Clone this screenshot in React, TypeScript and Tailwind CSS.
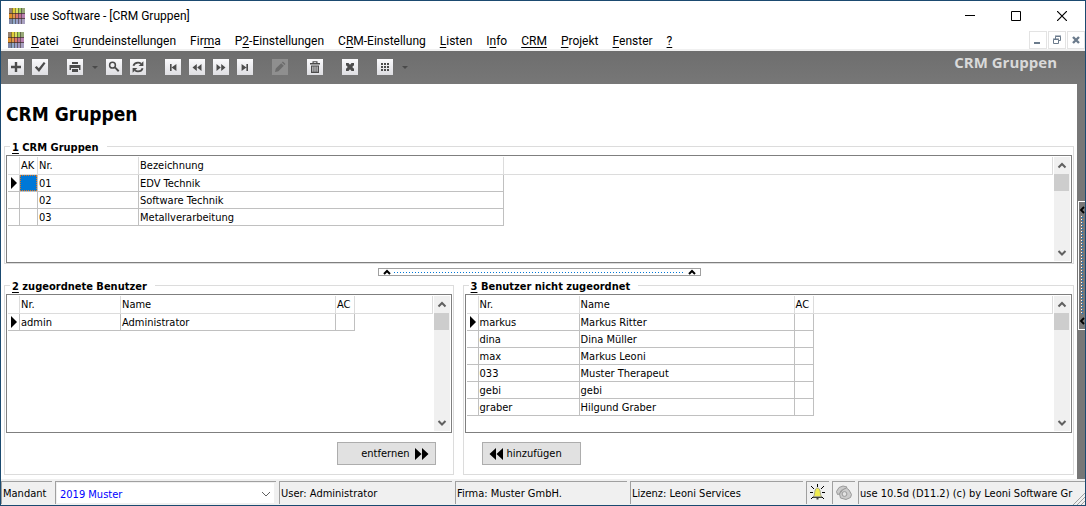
import type { ReactNode } from "react";

type Row = { id: string; cells: string[] };

const MENU = [
  { before: "", key: "D", after: "atei" },
  { before: "", key: "G", after: "rundeinstellungen" },
  { before: "Fir", key: "m", after: "a" },
  { before: "P", key: "2", after: "-Einstellungen" },
  { before: "C", key: "R", after: "M-Einstellung" },
  { before: "", key: "L", after: "isten" },
  { before: "I", key: "n", after: "fo" },
  { before: "", key: "CRM", after: "" },
  { before: "", key: "P", after: "rojekt" },
  { before: "", key: "F", after: "enster" },
  { before: "", key: "?", after: "" },
];

const GROUPS: Row[] = [
  { id: "01", cells: ["", "01", "EDV Technik"] },
  { id: "02", cells: ["", "02", "Software Technik"] },
  { id: "03", cells: ["", "03", "Metallverarbeitung"] },
];

const ASSIGNED: Row[] = [{ id: "admin", cells: ["admin", "Administrator", ""] }];

const UNASSIGNED: Row[] = [
  { id: "markus", cells: ["markus", "Markus Ritter", ""] },
  { id: "dina", cells: ["dina", "Dina Müller", ""] },
  { id: "max", cells: ["max", "Markus Leoni", ""] },
  { id: "033", cells: ["033", "Muster Therapeut", ""] },
  { id: "gebi", cells: ["gebi", "gebi", ""] },
  { id: "graber", cells: ["graber", "Hilgund Graber", ""] },
];

const GROUP_COLS = ["w-[18px]", "w-[101px]", "w-[365px]"];
const USER_COLS = ["w-[101px]", "w-[215px]", "w-[19px]"];

function AppLogo() {
  const cells = [
    ["#958070", "#e2cc38", "#dce060", "#a0cc60", "#98a878"],
    ["#e0902c", "#e09848", "#e07868", "#c07090", "#b880b0"],
    ["#8088a8", "#90a8c8", "#98a0c8", "#a098c0", "#a8a0c0"],
  ];
  return (
    <svg width="16" height="16" viewBox="0 0 16 16" aria-hidden="true" shapeRendering="crispEdges">
      {cells.map((line, y) =>
        line.map((fill, x) => (
          <rect key={`${x}-${y}`} x={[0, 3, 6, 9, 12][x]} y={[0, 5, 11][y]} width="4" height="6" fill={fill} />
        ))
      )}
      <path d="M3.5 0v16M6.500 0v16M9.500 0v16M12.500 0v16" stroke="#302820" strokeOpacity="0.5" fill="none" />
      <path d="M0 5.500h16M0 10.500h16" stroke="#302820" strokeOpacity="0.65" fill="none" />
    </svg>
  );
}

function ToolButton({ label, disabled, children }: { label: string; disabled?: boolean; children: ReactNode }) {
  return (
    <button
      type="button"
      aria-label={label}
      disabled={disabled}
      className={
        disabled
          ? "size-4 bg-[#8f8f8f] text-[#6c6c6c]"
          : "size-4 bg-linear-to-b from-[#fafafc] to-[#dedee2] text-[#4c4c4c]"
      }
    >
      <svg width="16" height="16" viewBox="0 0 16 16" fill="currentColor" aria-hidden="true">
        {children}
      </svg>
    </button>
  );
}

function Caret() {
  return (
    <svg width="7" height="16" viewBox="0 0 7 16" fill="#4a4a4a" aria-hidden="true">
      <path d="M1 7h6l-3 3z" />
    </svg>
  );
}

function Toolbar() {
  return (
    <div className="flex h-[33px] items-start justify-between bg-linear-to-b from-[#6e6e6e] to-[#777777] pr-7 pl-[7px]">
      <div className="flex gap-[19px] pt-2">
        <div className="flex gap-2">
          <ToolButton label="Neu">
            <path d="M6.800 3h2.400v3.800H13v2.400H9.200V13H6.800V9.200H3V6.800h3.800z" />
          </ToolButton>
          <ToolButton label="Speichern">
            <path d="M2.800 8.500l1.800-1.600 2.200 2.300 5-6.200 1.700 1.300L7 12.900z" />
          </ToolButton>
        </div>
        <div className="flex gap-2">
          <ToolButton label="Drucken">
            <path d="M5 3h6v2H5zM2.500 6h11v5H12V9H4v2H2.500z" />
            <path d="M5 10h6v3H5z" />
          </ToolButton>
          <Caret />
          <ToolButton label="Suchen">
            <circle cx="6.5" cy="6.200" r="2.900" fill="none" stroke="currentColor" strokeWidth="1.500" />
            <path d="M8.400 9L9.600 7.800 13.400 11.400 12 12.900z" />
          </ToolButton>
          <ToolButton label="Aktualisieren">
            <path d="M3.4 6.800C4 4.800 5.800 3.600 8 3.600c1.300 0 2.300.4 3.100 1" fill="none" stroke="currentColor" strokeWidth="1.800" />
            <path d="M13.400 2.200v4.900H8.600z" />
            <path d="M12.600 9.200c-.6 2-2.400 3.200-4.600 3.200-1.300 0-2.300-.4-3.100-1" fill="none" stroke="currentColor" strokeWidth="1.800" />
            <path d="M2.600 13.800V8.900h4.800z" />
          </ToolButton>
        </div>
        <div className="flex gap-2">
          <ToolButton label="Erster">
            <path d="M5 5h1.600v7H5zM11.400 5v7L6.600 8.500z" />
          </ToolButton>
          <ToolButton label="Zurück">
            <path d="M7.800 5v7L3.500 8.500zM12.500 5v7L8.200 8.500z" />
          </ToolButton>
          <ToolButton label="Weiter">
            <path d="M3.500 5v7l4.300-3.500zM8.200 5v7l4.300-3.500z" />
          </ToolButton>
          <ToolButton label="Letzter">
            <path d="M9.400 5H11v7H9.400zM4.600 5v7l4.800-3.500z" />
          </ToolButton>
        </div>
        <ToolButton label="Bearbeiten" disabled>
          <path d="M3 13l.8-3.400 5.400-5.400 2.600 2.600-5.400 5.400zM9.900 3.500l1-1 2.600 2.600-1 1z" />
        </ToolButton>
        <ToolButton label="Löschen">
          <path d="M3 4h10v1.400H3zM5.500 2.200h5V4H9.300v-.8H6.700V4H5.500z" />
          <path d="M4 6.400h8V14H4zM5.400 7.600v5.200h1V7.600zM7.500 7.600v5.200h1V7.600zM9.600 7.600v5.200h1V7.600z" fillRule="evenodd" />
        </ToolButton>
        <ToolButton label="Abbrechen">
          <path d="M4 4h2.500L8 5.800 9.500 4H12v2.200L10.200 8 12 9.800V12H9.500L8 10.200 6.500 12H4V9.800L5.800 8 4 6.200z" />
        </ToolButton>
        <div className="flex gap-2">
          <ToolButton label="Ansicht">
            <path d="M4 4h2v2H4zM7 4h2v2H7zM10 4h2v2h-2zM4 7h2v2H4zM7 7h2v2H7zM10 7h2v2h-2zM4 10h2v2H4zM7 10h2v2H7zM10 10h2v2h-2z" />
          </ToolButton>
          <Caret />
        </div>
      </div>
      <span className="font-['Open_Sans','Noto_Sans',sans-serif] text-[15px] leading-[22px] font-bold text-[#d9d9d9]">CRM Gruppen</span>
    </div>
  );
}

function ScrollArrow({ down }: { down?: boolean }) {
  return (
    <button type="button" aria-label={down ? "Nach unten" : "Nach oben"} className="h-[17px] w-4">
      <svg width="16" height="17" viewBox="0 0 16 17" fill="none" stroke="#606060" strokeWidth="2" aria-hidden="true">
        <path d={down ? "M4.500 7L8 10.500 11.500 7" : "M4.500 10.500L8 7l3.500 3.500"} />
      </svg>
    </button>
  );
}

function ScrollBar() {
  return (
    <div className="flex w-4 shrink-0 flex-col bg-[#f0f0f0]">
      <ScrollArrow />
      <div className="h-[17px] w-[15px] bg-[#cdcdcd]" />
      <div className="flex-1" />
      <ScrollArrow down />
    </div>
  );
}

function Grid({ label, columns, widths, rows, selectFirst }: {
  label: string;
  columns: string[];
  widths: string[];
  rows: Row[];
  selectFirst?: boolean;
}) {
  return (
    <div className="flex min-h-0 flex-1 border border-[#7f7f7f] bg-white p-px">
      <div className="min-w-0 flex-1 overflow-hidden pr-px">
        <table aria-label={label} className="w-full table-fixed border-separate border-spacing-0 text-left">
          <colgroup>
            <col className="w-3" />
            {widths.map((w, i) => (
              <col key={i} className={w} />
            ))}
            <col />
          </colgroup>
          <thead>
            <tr>
              <th className="h-[18px] border-r border-b border-[#dcdcdc] p-0" />
              {columns.map((c) => (
                <th key={c} className="h-[18px] border-r border-b border-[#dcdcdc] p-0 pl-px font-normal whitespace-nowrap">
                  {c}
                </th>
              ))}
              <th className="h-[18px] border-r border-b border-[#dcdcdc] p-0" />
            </tr>
          </thead>
          <tbody>
            {rows.map((row, r) => (
              <tr key={row.id}>
                <td className="h-[17px] border-r border-b border-[#c0c0c0] p-0">
                  {r === 0 ? (
                    <svg width="11" height="12" viewBox="0 0 11 12" fill="#000" aria-hidden="true" className="block">
                      <path d="M3 0v12l6-6z" />
                    </svg>
                  ) : null}
                </td>
                {row.cells.map((cell, c) => (
                  <td key={c} className="h-[17px] border-r border-b border-[#c0c0c0] p-0 whitespace-nowrap">
                    {selectFirst && r === 0 && c === 0 ? (
                      <div className="h-4 border border-dotted border-[#e07820] bg-[#0078d7]" />
                    ) : (
                      <div className="h-4 pl-px leading-[18px]">{cell}</div>
                    )}
                  </td>
                ))}
                <td className="p-0" />
              </tr>
            ))}
          </tbody>
        </table>
      </div>
      <ScrollBar />
    </div>
  );
}

function GroupBox({ hotkey, title, className, children }: {
  hotkey: string;
  title: string;
  className?: string;
  children: ReactNode;
}) {
  return (
    <fieldset className={`min-w-0 border border-[#dcdcdc] px-px ${className ?? ""}`}>
      <legend className="ml-1 h-[17px] pr-2 pl-0.5 text-[11px] leading-5 font-bold">
        <u className="underline-offset-2">{hotkey}</u> {title}
      </legend>
      {children}
    </fieldset>
  );
}

function HorizontalSplitter() {
  return (
    <button
      type="button"
      aria-label="Bereich einklappen"
      className="flex h-2 w-[323px] items-center justify-between border border-[#a0a0a0] bg-white px-1"
    >
      <svg width="8" height="6" viewBox="0 0 8 6" fill="none" stroke="#000" strokeWidth="2" aria-hidden="true">
        <path d="M1 5L4 2l3 3" />
      </svg>
      <span className="mx-[3px] h-px flex-1 bg-[repeating-linear-gradient(90deg,#0078d7_0_1px,transparent_1px_3px)]" />
      <svg width="8" height="6" viewBox="0 0 8 6" fill="none" stroke="#000" strokeWidth="2" aria-hidden="true">
        <path d="M1 5L4 2l3 3" />
      </svg>
    </button>
  );
}

function SideSplitter() {
  const arrow = (
    <svg width="6" height="8" viewBox="0 0 6 8" fill="none" stroke="#000" strokeWidth="1.800" aria-hidden="true">
      <path d="M5 1L2 4l3 3" />
    </svg>
  );
  return (
    <div className="flex w-2 shrink-0 flex-col bg-[#777777]">
      <button
        type="button"
        aria-label="Seitenleiste einklappen"
        className="mt-[117px] ml-px flex h-[129px] flex-col items-center justify-between border border-r-0 border-white py-1"
      >
        {arrow}
        <span className="my-0.5 flex w-0.5 flex-1">
          <span className="w-px bg-[repeating-linear-gradient(180deg,#ffffff_0_1px,transparent_1px_3px)]" />
          <span className="w-px bg-[repeating-linear-gradient(180deg,transparent_0_1px,#0078d7_1px_2px,transparent_2px_3px)]" />
        </span>
        {arrow}
      </button>
    </div>
  );
}

function StatusPanel({ className, children }: { className: string; children: ReactNode }) {
  return (
    <div className={`h-[23px] overflow-hidden border-t border-l border-[#a0a0a0] pl-px leading-[23px] whitespace-nowrap ${className}`}>
      {children}
    </div>
  );
}

function StatusBar() {
  return (
    <footer className="relative flex h-[26px] shrink-0 gap-[3px] bg-[#f0f0f0] pt-0.5">
      <StatusPanel className="w-[51px] shrink-0">
        <label htmlFor="mandant">Mandant</label>
      </StatusPanel>
      <StatusPanel className="relative w-[221px] min-w-0 shrink">
        <select id="mandant" className="mt-px block h-5 w-[217px] appearance-none bg-white pl-[3px] text-[#0000ff]">
          <option>2019 Muster</option>
        </select>
        <svg width="10" height="8" viewBox="0 0 10 8" fill="none" stroke="#606060" aria-hidden="true" className="pointer-events-none absolute top-2 right-[5px]">
          <path d="M1 2l4 4 4-4" />
        </svg>
      </StatusPanel>
      <StatusPanel className="w-[173px] min-w-0 shrink">User: Administrator</StatusPanel>
      <StatusPanel className="w-[172px] min-w-0 shrink">Firma: Muster GmbH.</StatusPanel>
      <StatusPanel className="w-[173px] min-w-0 shrink">Lizenz: Leoni Services</StatusPanel>
      <StatusPanel className="w-[23px] shrink-0">
        <svg width="18" height="18" viewBox="0 0 18 18" aria-hidden="true" className="mt-0.5 ml-px">
          <path d="M2 2l3 3M15 2l-3 3M1 8.500h3M13 8.500h3M2 15l3-3M15 15l-3-3M8.500 0v3" stroke="#000" />
          <path d="M4.500 12.500c1.200-1.500 1-3.500 1.300-5C6.200 5.200 7.200 4 8.500 4s2.300 1.200 2.700 3.500c.3 1.500.1 3.500 1.300 5z" fill="#f0ec50" stroke="#a8a888" />
          <path d="M4 13h9v1H4zM7.500 14h2v1.500h-2z" fill="#444" />
        </svg>
      </StatusPanel>
      <StatusPanel className="w-[23px] shrink-0">
        <svg width="18" height="18" viewBox="0 0 18 18" fill="#cccccc" stroke="#9a9a9a" aria-hidden="true" className="mt-0.5 ml-px">
          <path d="M1.500 7.500l1 3 2-.5L6 6.500l5-2 1-1.500L8 2 4 3.500z" />
          <path d="M4.500 10L8 5.500l3.500-1.500L14 6l2.500 4.500-1 3L11 15.500 5.500 14z" />
          <circle cx="9.500" cy="10" r="2.400" fill="#e4e4e4" />
        </svg>
      </StatusPanel>
      <StatusPanel className="min-w-[200px] flex-1">use 10.5d (D11.2) (c) by Leoni Software Gr</StatusPanel>
      <svg width="12" height="12" viewBox="0 0 12 12" stroke="#a0a0a0" aria-hidden="true" className="absolute right-0 bottom-0">
        <path d="M0 12L12 0M4 12l8-8M8 12l4-4" />
      </svg>
    </footer>
  );
}

function WindowHeader() {
  return (
    <header className="font-['Roboto','Open_Sans',sans-serif] text-[12px]">
      <div className="flex h-[29px] items-center pl-2">
        <AppLogo />
        <span className="ml-[5px] flex-1">use Software - [CRM Gruppen]</span>
        <button type="button" aria-label="Minimieren" className="flex h-7 w-[46px] items-center justify-center">
          <svg width="10" height="10" viewBox="0 0 10 10" stroke="#000" aria-hidden="true"><path d="M0 4.500h10" /></svg>
        </button>
        <button type="button" aria-label="Maximieren" className="flex h-7 w-[46px] items-center justify-center">
          <svg width="10" height="10" viewBox="0 0 10 10" stroke="#000" fill="none" aria-hidden="true"><path d="M.5.5h9v9h-9z" /></svg>
        </button>
        <button type="button" aria-label="Schließen" className="flex h-7 w-[46px] items-center justify-center">
          <svg width="10" height="10" viewBox="0 0 10 10" stroke="#000" strokeWidth="1.200" aria-hidden="true"><path d="M0 0l10 10M10 0L0 10" /></svg>
        </button>
      </div>
      <div className="flex h-[21px] items-center border-b-2 border-[#f0f0f0] pl-[7px]">
        <AppLogo />
        <nav className="mt-0.5 ml-[7px] flex flex-1 gap-[14px]">
          {MENU.map((m) => (
            <button key={m.before + m.key + m.after} type="button" className="whitespace-nowrap">
              {m.before}
              <u className="underline-offset-2">{m.key}</u>
              {m.after}
            </button>
          ))}
        </nav>
        <div className="mt-px flex gap-px">
          <button type="button" aria-label="Fenster minimieren" className="size-[18px] border border-[#e3e3e3]">
            <svg width="16" height="16" viewBox="0 0 16 16" fill="#6b7b8c" aria-hidden="true"><path d="M4 10h6v2H4z" /></svg>
          </button>
          <button type="button" aria-label="Fenster wiederherstellen" className="size-[18px] border border-[#e3e3e3]">
            <svg width="16" height="16" viewBox="0 0 16 16" fill="none" stroke="#6b7b8c" aria-hidden="true">
              <path d="M4.500 7.500h5v4h-5zM6.500 7V4.500h5v4H10M4 7h6M6 4h6" />
            </svg>
          </button>
          <button type="button" aria-label="Fenster schließen" className="size-[18px] border border-[#e3e3e3]">
            <svg width="16" height="16" viewBox="0 0 16 16" stroke="#6b7b8c" strokeWidth="2.400" aria-hidden="true"><path d="M5 5l6 6M11 5l-6 6" /></svg>
          </button>
        </div>
      </div>
    </header>
  );
}

export default function App() {
  return (
    <div className="flex min-h-screen flex-col border border-[#1b4a70] bg-white font-['DejaVu_Sans_Condensed','DejaVu_Sans',sans-serif] text-[11px] leading-4 text-black">
      <WindowHeader />
      <Toolbar />
      <div className="flex flex-1">
        <main className="flex min-w-0 flex-1 flex-col px-[3px] pt-4 pb-1">
          <h1 className="mb-[10px] pl-0.5 text-[19px] leading-7 font-bold">CRM Gruppen</h1>
          <GroupBox hotkey="1" title="CRM Gruppen">
            <div className="flex h-[108px]">
              <Grid label="CRM Gruppen" columns={["AK", "Nr.", "Bezeichnung"]} widths={GROUP_COLS} rows={GROUPS} selectFirst />
            </div>
          </GroupBox>
          <div className="flex justify-center pt-1">
            <HorizontalSplitter />
          </div>
          <div className="mt-px grid flex-1 grid-cols-[450fr_612fr] gap-[9px]">
            <GroupBox hotkey="2" title="zugeordnete Benutzer">
              <div className="flex h-[139px]">
                <Grid label="zugeordnete Benutzer" columns={["Nr.", "Name", "AC"]} widths={USER_COLS} rows={ASSIGNED} />
              </div>
              <div className="mt-[9px] flex justify-end pr-4">
                <button type="button" className="flex h-[23px] w-[99px] items-center justify-end border border-[#adadad] bg-[#e1e1e1] pr-1.5">
                  entfernen
                  <svg width="15" height="12" viewBox="0 0 15 12" aria-hidden="true" className="ml-1">
                    <path d="M1 0v12l6.500-6zM8 0v12l6.500-6z" />
                  </svg>
                </button>
              </div>
            </GroupBox>
            <GroupBox hotkey="3" title="Benutzer nicht zugeordnet">
              <div className="flex h-[139px]">
                <Grid label="Benutzer nicht zugeordnet" columns={["Nr.", "Name", "AC"]} widths={USER_COLS} rows={UNASSIGNED} />
              </div>
              <div className="mt-[9px] flex pl-[17px]">
                <button type="button" className="flex h-[23px] w-[99px] items-center border border-[#adadad] bg-[#e1e1e1] pl-1.5">
                  <svg width="15" height="12" viewBox="0 0 15 12" aria-hidden="true" className="mr-[3px]">
                    <path d="M7 0v12L.5 6zM14 0v12L7.500 6z" />
                  </svg>
                  hinzufügen
                </button>
              </div>
            </GroupBox>
          </div>
        </main>
        <SideSplitter />
      </div>
      <StatusBar />
    </div>
  );
}
